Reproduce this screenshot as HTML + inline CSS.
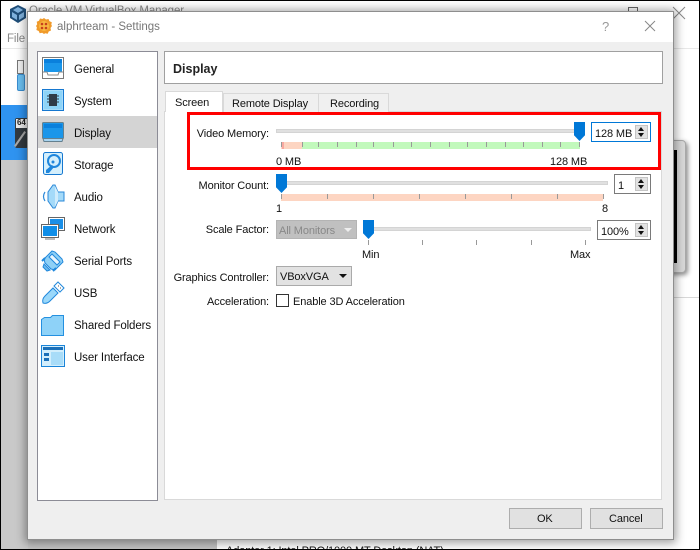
<!DOCTYPE html>
<html style="height:550px;overflow:hidden"><head><meta charset="utf-8"><style>
html,body{margin:0;padding:0}
body{width:700px;height:550px;overflow:hidden;position:relative;background:#fff;font-family:"Liberation Sans",sans-serif;font-size:12px;color:#111}
.a{position:absolute;box-sizing:border-box}
.t{position:absolute;white-space:nowrap;line-height:14px;font-size:11px;letter-spacing:-.12px}
.l{font-size:11.5px;letter-spacing:-.12px}
.r{text-align:right;width:120px}
.thumb{position:absolute;width:11px;height:19px;background:#0078d7;clip-path:polygon(0 0,100% 0,100% 70%,50% 100%,0 70%)}
.track{position:absolute;height:4px;background:#e0e0e0;border:1px solid #d4d4d4;box-sizing:border-box}
.spin{position:absolute;box-sizing:border-box;background:#fff;border:1px solid #7a7a7a;height:20px}
.btns{position:absolute;right:2px;top:2px;width:13px;height:14px;background:#e2e2e2;border:1px solid #c4c4c4;box-sizing:border-box}
.btns:before{content:"";position:absolute;left:2px;top:1px;border:3px solid transparent;border-top:0;border-bottom:4px solid #111}
.btns:after{content:"";position:absolute;left:2px;top:7px;border:3px solid transparent;border-bottom:0;border-top:4px solid #111}
.tick{position:absolute;width:1px;height:5px;background:#999}
svg{position:absolute}
</style></head><body>

<!-- background manager window -->
<svg style="left:8px;top:4px" width="20" height="20" viewBox="0 0 20 20"><path d="M10 1l8 4v9l-8 5-8-5V5z" fill="#1f4e79"/><path d="M10 3l5 3-5 3-5-3zM4 8l5 3v5l-5-3zM16 8l-5 3v5l5-3z" fill="#7fb2de"/></svg>
<div class="t" style="left:29px;top:4px;color:#888;font-size:11.500px">Oracle VM VirtualBox Manager</div>
<div class="t" style="left:7px;top:32px;color:#888;font-size:11.500px">File</div>
<div class="a" style="left:0;top:48px;width:700px;height:1px;background:#e8e8e8"></div>
<div class="a" style="left:17px;top:60px;width:7px;height:14px;background:#f2f2f2;border:1px solid #777"></div>
<div class="a" style="left:17px;top:74px;width:8px;height:17px;background:#6cc0f2;border:1px solid #3a8ed0;border-radius:2px"></div>
<div class="a" style="left:0;top:105px;width:28px;height:55px;background:#2f93f0"></div>
<div class="a" style="left:15px;top:118px;width:13px;height:30px;background:#333a40;border-radius:2px"></div>
<div class="a" style="left:16px;top:119px;width:12px;height:9px;background:#eee"></div>
<div class="t" style="left:17px;top:116px;font-size:8px;color:#222;font-weight:bold">64</div>
<div class="a" style="left:19px;top:130px;width:2px;height:18px;background:#aaa;transform:rotate(35deg)"></div>
<div class="a" style="left:0;top:160px;width:28px;height:390px;background:#c9c9c9"></div>
<div class="a" style="left:28px;top:500px;width:189px;height:50px;background:#c4c4c4"></div>
<div class="a" style="left:673px;top:297px;width:27px;height:1px;background:#d8d8d8"></div>
<div class="a" style="left:660px;top:140px;width:26px;height:133px;background:#d9d9d9;border:1px solid #aaa;border-radius:4px;box-shadow:2px 2px 5px rgba(0,0,0,.45)"></div>
<div class="a" style="left:660px;top:150px;width:17px;height:113px;background:#000"></div>
<div class="a" style="left:226px;top:546px;width:240px;height:3px;overflow:hidden"><div class="t" style="left:0;top:-2px;color:#111">Adapter 1: Intel PRO/1000 MT Desktop (NAT)</div></div>
<div class="a" style="left:628px;top:7px;width:10px;height:6px;border:1px solid #666;border-bottom:0"></div>
<svg style="left:672px;top:6px" width="14" height="14"><path d="M1 1l12 12M13 1L1 13" stroke="#888" fill="none"/></svg>

<!-- dialog -->
<div class="a" style="left:27px;top:11px;width:647px;height:529px;background:#efefef;border:1px solid #8e8e8e;box-shadow:0 1px 9px 2px rgba(0,0,0,.38)"></div>
<div class="a" style="left:28px;top:12px;width:645px;height:30px;background:#fff"></div>
<svg style="left:36px;top:18px" width="16" height="16" viewBox="0 0 16 16"><path d="M8 0l2 1.500 2.500-.5 1 2.300 2.300 1-.5 2.500L16 8l-1.500 2 .5 2.500-2.300 1-1 2.300-2.500-.5L8 16l-1.800-1.200-2.500.5-1-2.300-2.300-1 .5-2.500L0 8l1.200-1.700-.5-2.500 2.300-1 1-2.300 2.500.5z" fill="#f09a2a"/><circle cx="8" cy="8" r="5" fill="#f8b840"/><circle cx="6" cy="6" r="1.300" fill="#c8401c"/><circle cx="10" cy="6" r="1.300" fill="#c8401c"/><circle cx="6" cy="10" r="1.300" fill="#c8401c"/><circle cx="10" cy="10" r="1.300" fill="#c8401c"/></svg>
<div class="t" style="left:57px;top:20px;color:#777;font-size:11.500px;letter-spacing:0">alphrteam - Settings</div>
<div class="t" style="left:602px;top:20px;color:#999;font-size:13px">?</div>
<svg style="left:644px;top:20px" width="12" height="12"><path d="M1 1l10 10M11 1L1 11" stroke="#888" fill="none"/></svg>

<!-- list -->
<div class="a" style="left:37px;top:51px;width:121px;height:450px;background:#fff;border:1px solid #8c8c96"></div>
<div class="a" style="left:38px;top:116px;width:119px;height:32px;background:#d4d4d4"></div>

<svg style="left:42px;top:57px" width="24" height="23" viewBox="0 0 24 23"><rect x=".5" y=".5" width="21" height="21" fill="#fff" stroke="#7a7a7a"/><rect x="2" y="2" width="18" height="13" fill="#1a96ea"/><rect x="2" y="2" width="18" height="4" fill="#0a80dc"/><path d="M1 15h4l1 3h10l1-3h4" stroke="#888" fill="none"/></svg>
<svg style="left:42px;top:89px" width="22" height="22" viewBox="0 0 22 22"><rect x=".5" y=".5" width="21" height="21" fill="#a8dcfa" stroke="#1678d0"/><rect x="2" y="2" width="18" height="18" fill="#8ed4f8"/><rect x="7" y="5" width="8" height="12" fill="#2f3b48"/><path d="M5 7h2M5 10h2M5 13h2M15 7h2M15 10h2M15 13h2" stroke="#2f3b48"/></svg>
<svg style="left:42px;top:122px" width="22" height="20" viewBox="0 0 22 20"><rect x=".5" y=".5" width="21" height="16" rx="1" fill="#1a96ea" stroke="#64808f"/><rect x="2" y="2" width="18" height="4" fill="#0a80dc"/><path d="M1 16.500h20l-1 3H2z" fill="#a8d4f0" stroke="#64808f"/></svg>
<svg style="left:43px;top:152px" width="20" height="23" viewBox="0 0 20 23"><rect x=".5" y=".5" width="19" height="22" rx="2" fill="#d4effc" stroke="#1678d0"/><circle cx="11" cy="9" r="6" fill="none" stroke="#1f86dc" stroke-width="2"/><circle cx="10" cy="10" r="1.500" fill="#1f86dc"/><path d="M3 18l6-5 2 2-5 6H3z" fill="#1f86dc"/></svg>
<svg style="left:41px;top:184px" width="24" height="25" viewBox="0 0 24 25"><path d="M7 8l5-7h2l3 7h6v9h-6l-3 7h-2l-5-7z" fill="#a4daf9" stroke="#2a88d8"/><path d="M14 2l3 6v9l-3 6z" fill="#d0ecfc"/><path d="M4 8c-2 3-2 6 0 9" fill="none" stroke="#2a88d8" stroke-width="1.200"/></svg>
<svg style="left:41px;top:217px" width="24" height="23" viewBox="0 0 24 23"><rect x="7.500" y=".5" width="16" height="13" fill="#fff" stroke="#666"/><rect x="9" y="2" width="13" height="10" fill="#1a8fe8"/><rect x=".5" y="7.500" width="17" height="13" fill="#fff" stroke="#666"/><rect x="2" y="9" width="14" height="10" fill="#0f8ee8"/><path d="M4 22h10" stroke="#777"/></svg>
<svg style="left:41px;top:249px" width="24" height="24" viewBox="0 0 24 24"><path d="M3 10l8-8 3 1 7 7 1 3-8 8-4-1-6-6z" fill="#8ed0f6" stroke="#2088dc"/><path d="M8 8l3-3 8 8-3 3z" fill="#eaf6fd" stroke="#2088dc"/><path d="M1 12l3-3M12 22l3-3" stroke="#2088dc" stroke-width="2"/><path d="M2 18l4 4 3-1-6-6z" fill="#6cbcf0" stroke="#2088dc"/></svg>
<svg style="left:41px;top:281px" width="24" height="24" viewBox="0 0 24 24"><path d="M2 22c-1-3 0-5 2-7l8-8 5 5-8 8c-2 2-4 3-7 2z" fill="#9ad8fa" stroke="#2088dc"/><path d="M13 5l4-4 6 6-4 4z" fill="#fff" stroke="#2088dc"/><path d="M17 5h1M19 7h1" stroke="#555"/></svg>
<svg style="left:41px;top:314px" width="24" height="22" viewBox="0 0 24 22"><path d="M.5 5.500l3-2h6l2-2h11v20H.5z" fill="#8ed2f8" stroke="#2490e0"/></svg>
<svg style="left:41px;top:345px" width="24" height="22" viewBox="0 0 24 22"><rect x=".5" y=".5" width="23" height="21" fill="#d2eefc" stroke="#1a84d8"/><rect x="2" y="2" width="20" height="3" fill="#1a6fb8"/><rect x="3" y="8" width="5" height="3" fill="#1a6fb8"/><rect x="3" y="13" width="5" height="3" fill="#1a6fb8"/><rect x="10" y="7" width="12" height="13" fill="#a8dcf8"/></svg>

<div class="t l" style="left:74px;top:63px">General</div>
<div class="t l" style="left:74px;top:95px">System</div>
<div class="t l" style="left:74px;top:127px">Display</div>
<div class="t l" style="left:74px;top:159px">Storage</div>
<div class="t l" style="left:74px;top:191px">Audio</div>
<div class="t l" style="left:74px;top:223px">Network</div>
<div class="t l" style="left:74px;top:255px">Serial Ports</div>
<div class="t l" style="left:74px;top:287px">USB</div>
<div class="t l" style="left:74px;top:319px">Shared Folders</div>
<div class="t l" style="left:74px;top:351px">User Interface</div>

<!-- header -->
<div class="a" style="left:164px;top:51px;width:499px;height:33px;background:#fff;border:1px solid #a0a0a0"></div>
<div class="t" style="left:173px;top:62px;font-weight:bold;font-size:12.500px;letter-spacing:0;color:#222">Display</div>

<!-- tabs -->
<div class="a" style="left:164px;top:111px;width:498px;height:389px;background:#fff;border:1px solid #d9d9d9"></div>
<div class="a" style="left:223px;top:93px;width:96px;height:19px;background:#f0f0f0;border:1px solid #d9d9d9;border-bottom:0"></div>
<div class="a" style="left:318px;top:93px;width:71px;height:19px;background:#f0f0f0;border:1px solid #d9d9d9;border-bottom:0"></div>
<div class="a" style="left:165px;top:91px;width:58px;height:21px;background:#fff;border:1px solid #d9d9d9;border-bottom:0"></div>
<div class="t" style="left:175px;top:96px">Screen</div>
<div class="t" style="left:232px;top:97px">Remote Display</div>
<div class="t" style="left:330px;top:97px">Recording</div>

<!-- Video memory -->
<div class="t r" style="left:149px;top:127px">Video Memory:</div>
<div class="track" style="left:276px;top:129px;width:304px"></div>
<div class="a" style="left:281px;top:142px;width:299px;height:7px;background:#c2f9bc"></div>
<div class="a" style="left:281px;top:142px;width:21px;height:7px;background:#fdd5c2"></div>
<div class="a" style="left:282px;top:142px;width:2px;height:7px;background:#f8a8a0"></div>
<div class="tick" style="left:281px;top:142px"></div><div class="tick" style="left:302px;top:142px"></div><div class="tick" style="left:318px;top:142px"></div><div class="tick" style="left:337px;top:142px"></div><div class="tick" style="left:356px;top:142px"></div><div class="tick" style="left:373px;top:142px"></div><div class="tick" style="left:393px;top:142px"></div><div class="tick" style="left:411px;top:142px"></div><div class="tick" style="left:430px;top:142px"></div><div class="tick" style="left:449px;top:142px"></div><div class="tick" style="left:467px;top:142px"></div><div class="tick" style="left:486px;top:142px"></div><div class="tick" style="left:505px;top:142px"></div><div class="tick" style="left:523px;top:142px"></div><div class="tick" style="left:542px;top:142px"></div><div class="tick" style="left:560px;top:142px"></div><div class="tick" style="left:579px;top:142px"></div>
<div class="thumb" style="left:574px;top:122px"></div>
<div class="t" style="left:276px;top:155px">0 MB</div>
<div class="t" style="left:550px;top:155px">128 MB</div>
<div class="spin" style="left:591px;top:122px;width:60px;border-color:#0078d7"><span class="t" style="left:3px;top:4px">128 MB</span><div class="btns"></div></div>

<!-- Red box -->
<div class="a" style="left:187px;top:112px;width:474px;height:58px;border:3px solid #f00"></div>

<!-- Monitor Count -->
<div class="t r" style="left:149px;top:179px">Monitor Count:</div>
<div class="track" style="left:276px;top:181px;width:332px"></div>
<div class="a" style="left:281px;top:194px;width:322px;height:7px;background:#fdd5c2"></div>
<div class="tick" style="left:281px;top:194px"></div><div class="tick" style="left:327px;top:194px"></div><div class="tick" style="left:373px;top:194px"></div><div class="tick" style="left:419px;top:194px"></div><div class="tick" style="left:465px;top:194px"></div><div class="tick" style="left:511px;top:194px"></div><div class="tick" style="left:557px;top:194px"></div><div class="tick" style="left:603px;top:194px"></div>
<div class="thumb" style="left:276px;top:174px"></div>
<div class="t" style="left:276px;top:202px">1</div>
<div class="t" style="left:602px;top:202px">8</div>
<div class="spin" style="left:614px;top:174px;width:37px"><span class="t" style="left:3px;top:4px">1</span><div class="btns"></div></div>

<!-- Scale Factor -->
<div class="t r" style="left:149px;top:223px">Scale Factor:</div>
<div class="a" style="left:276px;top:220px;width:81px;height:19px;background:#c0c0c0;border:1px solid #b4b4b4"></div>
<div class="t" style="left:279px;top:224px;color:#888">All Monitors</div>
<div class="a" style="left:344px;top:228px;border:4px solid transparent;border-bottom:0;border-top:4px solid #eee"></div>
<div class="track" style="left:363px;top:227px;width:228px"></div>
<div class="thumb" style="left:363px;top:220px"></div>
<div class="tick" style="left:368px;top:240px"></div><div class="tick" style="left:422px;top:240px"></div><div class="tick" style="left:476px;top:240px"></div><div class="tick" style="left:531px;top:240px"></div><div class="tick" style="left:585px;top:240px"></div>
<div class="t" style="left:362px;top:248px">Min</div>
<div class="t" style="left:570px;top:248px">Max</div>
<div class="spin" style="left:597px;top:220px;width:54px"><span class="t" style="left:3px;top:4px">100%</span><div class="btns"></div></div>

<!-- Graphics controller -->
<div class="t r" style="left:149px;top:271px">Graphics Controller:</div>
<div class="a" style="left:276px;top:266px;width:76px;height:20px;background:#e2e2e2;border:1px solid #aaa"></div>
<div class="t" style="left:280px;top:270px">VBoxVGA</div>
<div class="a" style="left:339px;top:274px;border:4px solid transparent;border-bottom:0;border-top:4px solid #111"></div>

<!-- Acceleration -->
<div class="t r" style="left:149px;top:295px">Acceleration:</div>
<div class="a" style="left:276px;top:294px;width:13px;height:13px;background:#fff;border:1px solid #333"></div>
<div class="t" style="left:293px;top:295px">Enable 3D Acceleration</div>

<!-- Buttons -->
<div class="a" style="left:509px;top:508px;width:73px;height:21px;background:#e1e1e1;border:1px solid #adadad"></div>
<div class="a" style="left:590px;top:508px;width:73px;height:21px;background:#e1e1e1;border:1px solid #adadad"></div>
<div class="t" style="left:537px;top:512px">OK</div>
<div class="t" style="left:609px;top:512px">Cancel</div>

<!-- screenshot outer edge -->
<div class="a" style="left:0;top:0;width:700px;height:550px;border:1px solid #000;pointer-events:none"></div>
</body></html>
